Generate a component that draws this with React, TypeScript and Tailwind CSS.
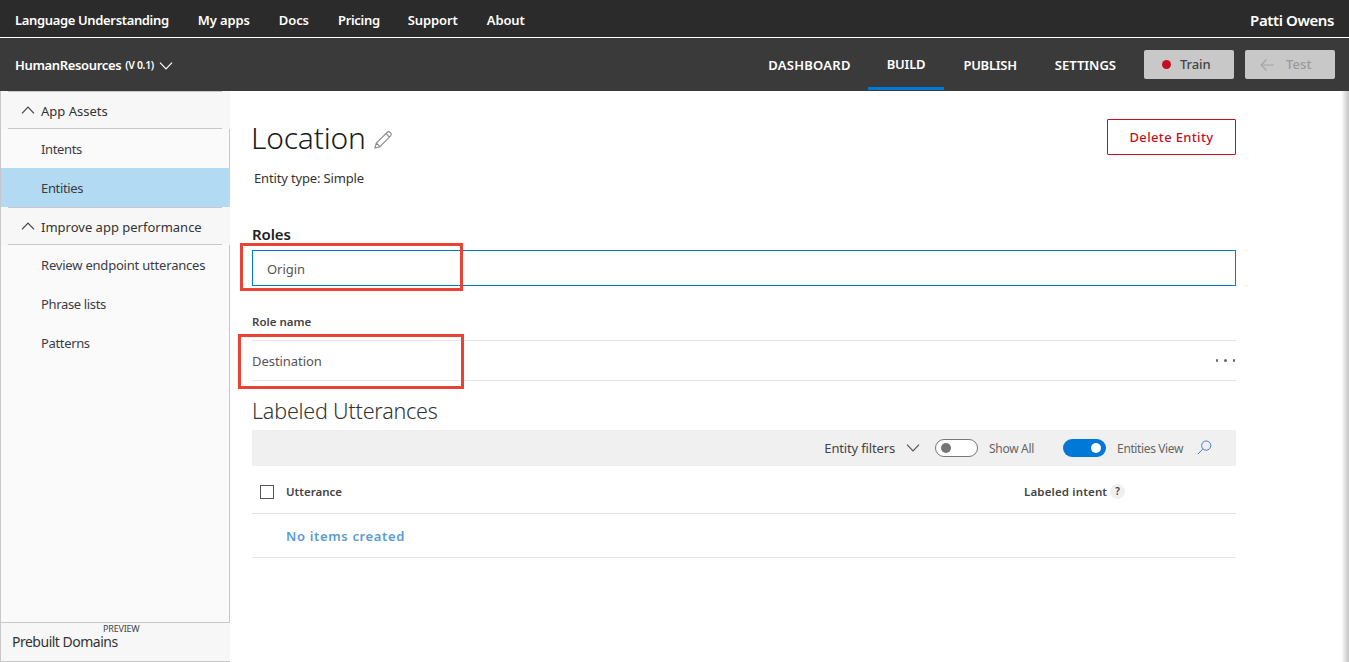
import React from "react";

const font = { fontFamily: '"Noto Sans", "Open Sans", sans-serif' };

function Chevron({ up = false, className = "" }: { up?: boolean; className?: string }) {
  return (
    <svg width="14" height="8" viewBox="0 0 14 8" fill="none" stroke="currentColor" strokeWidth="1.2" className={className}>
      <path d={up ? "M1 7.3 L7 1 L13 7.3" : "M1 .7 L7 7 L13 .7"} />
    </svg>
  );
}

function NavItem({ children, active = false, wide = false }: { children: React.ReactNode; active?: boolean; wide?: boolean }) {
  return (
    <div
      className={`flex h-[39px] items-center pl-[40px] pt-[2px] text-[13px] text-[#3c3a46] ${wide ? "tracking-[-0.2px]" : "tracking-[-0.35px]"} ${
        active ? "bg-[#b2daf2]" : "border-r border-[#c8c8c8]"
      }`}
    >
      {children}
    </div>
  );
}

function NavHead({ children }: { children: React.ReactNode }) {
  return (
    <div className="relative flex h-[38px] items-center gap-[6px] bg-[#f7f7f7] pl-[20px] text-[13px] tracking-[0px] text-[#333]">
      <div className="absolute left-[7px] top-0 h-px w-[214px] bg-[#c8c8c8]" />
      <Chevron up className="text-[#444]" />
      <span className="pt-[3px]">{children}</span>
      <div className="absolute bottom-0 left-[7px] h-px w-[214px] bg-[#c8c8c8]" />
    </div>
  );
}

export default function App() {
  return (
    <div className="relative h-[662px] w-[1349px] overflow-hidden bg-white" style={font}>
      <header className="flex h-[37px] items-center justify-between bg-[#2b2b2b] px-[15px] pt-[3px] text-[13px] font-semibold text-white">
        <nav className="flex items-center gap-[29px] pt-[2px] tracking-[-0.1px]">
          <span className="tracking-[-0.35px]">Language Understanding</span>
          <span>My apps</span>
          <span>Docs</span>
          <span className="tracking-[-0.3px]">Pricing</span>
          <span className="-ml-px tracking-[-0.1px]">Support</span>
          <span>About</span>
        </nav>
        <span className="text-[15px] tracking-[-0.4px]">Patti Owens</span>
      </header>
      <div className="h-px bg-white" />
      <div className="flex h-[53px] items-center justify-between bg-[#3a3a3a] pl-[15px] pr-[14px] text-white">
        <div className="flex items-center pt-[2px] font-semibold tracking-[-0.35px]">
          <span className="text-[13px]">HumanResources</span>
          <span className="ml-[4px] text-[10.5px]">(V 0.1)</span>
          <Chevron className="ml-[5px] mt-[1px]" />
        </div>
        <div className="flex h-full items-center">
          <nav className="flex h-full items-center text-[13px] font-semibold">
            <span className="flex h-full items-center pl-[19px] pr-[17px] pt-[2px] tracking-[0.25px]">DASHBOARD</span>
            <span className="flex h-[52px] items-center self-start border-b-[3px] border-[#0078d7] px-[19px] pt-[5px] tracking-[-0.2px]">BUILD</span>
            <span className="flex h-full items-center px-[19px] pt-[2px] tracking-[-0.25px]">PUBLISH</span>
            <span className="mr-[9px] flex h-full items-center px-[19px] pt-[2px] tracking-[0px]">SETTINGS</span>
          </nav>
          <button className="flex h-[29px] w-[90px] items-center gap-[9px] rounded-[2px] bg-[#c8c8c8] pl-[18px] text-[13px] font-medium tracking-[-0.1px] text-[#444]">
            <span className="h-[9px] w-[9px] rounded-full bg-[#c50f1f]" />
            Train
          </button>
          <button className="ml-[11px] flex h-[29px] w-[90px] items-center gap-[12px] rounded-[2px] bg-[#c8c8c8] pl-[15px] text-[13px] font-medium tracking-[0.1px] text-[#999]">
            <svg width="14" height="12" viewBox="0 0 14 12" fill="none" stroke="#a3a3a3" strokeWidth="1.1">
              <path d="M14 6 H1 M6.5 .5 L1 6 L6.5 11.5" />
            </svg>
            Test
          </button>
        </div>
      </div>

      <div className="flex h-[571px]">
        <aside className="flex w-[230px] shrink-0 flex-col bg-[#fafafa]">
          <div className="flex flex-1 flex-col border-l border-[#c8c8c8]">
            <NavHead>App Assets</NavHead>
            <NavItem>Intents</NavItem>
            <NavItem active>Entities</NavItem>
            <NavHead>Improve app performance</NavHead>
            <NavItem wide>Review endpoint utterances</NavItem>
            <NavItem>Phrase lists</NavItem>
            <NavItem>Patterns</NavItem>
            <div className="flex-1 border-r border-[#c8c8c8]" />
          </div>
          <div className="relative h-[40px] border-y border-l border-[#c8c8c8] bg-[#f7f7f7] pl-[11px] text-[14px] tracking-[-0.5px] text-[#333]">
            <span className="absolute left-[102px] top-[-1px] text-[9px] tracking-[-0.2px] text-[#444]">PREVIEW</span>
            <div className="pt-[8px]">Prebuilt Domains</div>
          </div>
        </aside>

        <main className="w-[1006px] pl-[22px]">
          <div className="flex h-[78px] items-start justify-between pt-[28px]">
            <div className="flex items-center gap-[7px]">
              <h1 className="-ml-px text-[30px] leading-[38px] tracking-[-0.2px] text-[#1a1a1a]" style={{ fontWeight: 300 }}>Location</h1>
              <svg width="20" height="20" viewBox="0 0 20 20" fill="none" stroke="#8a8a8a" strokeWidth="1.1" className="mt-[3px]">
                <path d="M2 18 L3.3 13 L14.5 2 Q15.7 1.2 17 2.2 L18 3.4 Q18.8 4.6 17.8 5.6 L7 16.7 Z M3.3 13 L7 16.7 M13 3.6 L16.4 7" />
              </svg>
            </div>
            <button className="h-[36px] w-[129px] rounded-[1px] border border-[#c50f1f] pt-[1px] text-[13px] font-medium tracking-[0.35px] text-[#c50f1f]">
              Delete Entity
            </button>
          </div>
          <div className="pl-[2px] text-[13px] leading-[18px] tracking-[-0.15px] text-[#333]">Entity type: Simple</div>
          <div className="mt-[38px] text-[15px] font-semibold leading-[18px] tracking-[-0.1px] text-[#222]">Roles</div>
          <div className="mt-[7px] flex h-[36px] w-[984px] items-center border border-[#0078d7] pl-[14px] pt-[3px] text-[13px] tracking-[-0.05px] text-[#555]">
            Origin
          </div>
          <div className="mt-[28px] text-[11.5px] font-semibold leading-[16px] text-[#444]">Role name</div>
          <div className="mt-[10px] flex h-[41px] w-[984px] items-center justify-between border-y border-[#e4e4e4] text-[13px] tracking-[-0.05px] text-[#555]">
            <span className="pt-[2px]">Destination</span>
            <span className="flex gap-[6px] pr-[1px]">
              <i className="h-[2.5px] w-[2.5px] rounded-full bg-[#666]" />
              <i className="h-[2.5px] w-[2.5px] rounded-full bg-[#666]" />
              <i className="h-[2.5px] w-[2.5px] rounded-full bg-[#666]" />
            </span>
          </div>
          <h2 className="mt-[16px] text-[21.5px] leading-[28px] tracking-[-0.2px] text-[#333]" style={{ fontWeight: 300 }}>Labeled Utterances</h2>
          <div className="mt-[5px] flex h-[36px] w-[984px] items-center justify-end bg-[#f0f0f0] pr-[24px] text-[12px] tracking-[-0.3px] text-[#555]">
            <span className="pt-[2px] text-[13px] tracking-[-0.15px] text-[#444]">Entity filters</span>
            <Chevron className="ml-[11px] text-[#555]" />
            <span className="ml-[15px] flex h-[18px] w-[43px] items-center rounded-full border border-[#777] bg-white pl-[5px]">
              <i className="h-[10px] w-[10px] rounded-full bg-[#757575]" />
            </span>
            <span className="ml-[11px] pt-[2px] text-[#666]">Show All</span>
            <span className="ml-[29px] flex h-[18px] w-[43px] items-center justify-end rounded-full bg-[#0078d7] pr-[5px]">
              <i className="h-[10px] w-[10px] rounded-full bg-white" />
            </span>
            <span className="ml-[11px] pt-[2px] tracking-[-0.38px] text-[#666]">Entities View</span>
            <svg width="15" height="15" viewBox="0 0 15 15" fill="none" stroke="#4a7fd6" strokeWidth="1" className="ml-[14px] mb-[2px]">
              <circle cx="9.2" cy="5.6" r="4.6" />
              <path d="M5.8 9 L1 14" />
            </svg>
          </div>
          <div className="flex h-[48px] w-[984px] items-center border-b border-[#e4e4e4] pt-[4px] text-[11.5px] font-semibold tracking-[0.15px] text-[#444]">
            <span className="ml-[8px] h-[14px] w-[14px] border border-[#555]" />
            <span className="ml-[12px] tracking-[0px]">Utterance</span>
            <span className="ml-[682px]">Labeled intent</span>
            <span className="ml-[3px] flex h-[15px] w-[15px] items-center justify-center rounded-full bg-[#f0f0f0] text-[10px]">?</span>
          </div>
          <div className="flex h-[44px] w-[984px] items-center border-b border-[#e4e4e4] pl-[34px] pt-[3px] text-[13px] font-semibold tracking-[0.65px] text-[#5b9bd5]">
            No items created
          </div>
        </main>
        <div className="flex-1 bg-gradient-to-r from-white from-[93%] to-[#c4c4c4]" />
      </div>

      <div className="pointer-events-none absolute left-[240px] top-[243px] h-[48px] w-[223px] border-[3px] border-[#ea4335]" />
      <div className="pointer-events-none absolute left-[238px] top-[334px] h-[55px] w-[226px] border-[3px] border-[#ea4335]" />
    </div>
  );
}
